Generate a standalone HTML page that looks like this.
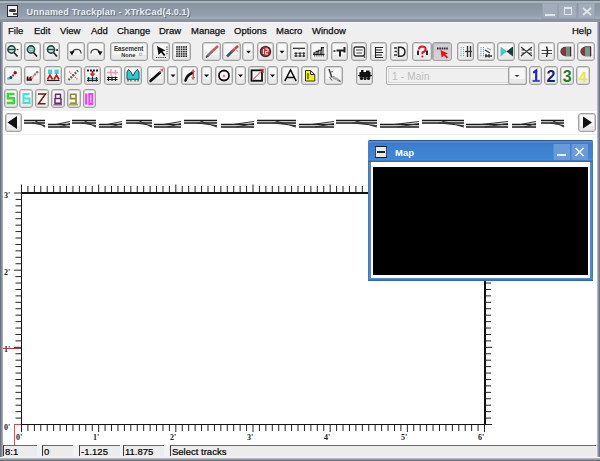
<!DOCTYPE html><html><head><meta charset="utf-8"><style>
*{margin:0;padding:0;box-sizing:border-box}
html,body{width:600px;height:461px;overflow:hidden;background:#efefef;font-family:"Liberation Sans",sans-serif}
.a{position:absolute}
.btn{position:absolute;border:1px solid #a2a2a2;border-radius:3px;background:linear-gradient(#f8f8f8 0,#f5f5f5 68%,#e9e9e9 69%,#eaeaea 100%);box-shadow:inset 0 0 0 1px #d4d4d4}
.btn svg{position:absolute;left:0;top:0}
.menu{position:absolute;top:25px;font-size:9.5px;color:#111;line-height:11px;-webkit-text-stroke:0.25px #111}
.fld{position:absolute;top:445px;height:11px;border-top:1px solid #6a6a6a;border-left:1px solid #3a3a3a;background:#ececec;font-size:9.5px;line-height:12.5px;padding-left:1px;color:#000;white-space:nowrap;overflow:hidden;-webkit-text-stroke:0.2px #000}
.lbl{position:absolute;font-family:"Liberation Serif",serif;font-size:8px;font-weight:bold;color:#222;line-height:8px}
</style></head><body>
<div class="a" style="left:0;top:0;width:600px;height:461px;background:#8a95a4"></div>
<div class="a" style="left:0;top:0;width:3px;height:461px;background:linear-gradient(90deg,#6b7282 0,#6b7282 1px,#878e9e 1px,#878e9e 2px,#a3a9b6 2px)"></div>
<div class="a" style="left:597px;top:0;width:3px;height:461px;background:linear-gradient(90deg,#b4b8c6 0,#b4b8c6 1px,#8a90a6 1px,#8a90a6 2px,#6e7590 2px)"></div>
<div class="a" style="left:0;top:457px;width:600px;height:4px;background:linear-gradient(#f4f8f8 0,#f4f8f8 1px,#b0b8c0 1px,#b0b8c0 2px,#8f98a3 2px,#8f98a3 3px,#6c7482 3px)"></div>
<div class="a" style="left:3px;top:22px;width:594px;height:436px;background:#efefef"></div>
<div class="a" style="left:0;top:0;width:600px;height:22px;background:linear-gradient(#6a7580 0,#6a7580 1px,#a8b4be 1px,#a8b4be 3px,#8894a0 3.5px,#8b97a4 7px,#95a1af 16px,#9eaab6 17px,#9eaab6 18.5px,#8a94a0 19.5px,#8c93a0 22px)"></div>
<div class="a" style="left:3px;top:22px;width:594px;height:2px;background:linear-gradient(#f3f5f9,#f0f1f3)"></div>
<div class="a" style="left:7px;top:5px;width:11px;height:12px;background:#f0f0f0;border:1px solid #2a2a34;border-width:1.5px 1px"><div class="a" style="left:1px;top:3px;width:7px;height:3px;background:#333;border-radius:2px"></div><div class="a" style="left:5px;top:7px;width:4px;height:2px;background:#555"></div></div>
<div class="a" style="left:26.5px;top:6px;font-size:9px;font-weight:bold;color:#e9ecf0;text-shadow:1px 1px 0 #6a7480;line-height:12px;letter-spacing:0.22px;white-space:nowrap">Unnamed Trackplan - XTrkCad(4.0.1)</div>
<div class="a" style="left:542px;top:3px;width:16px;height:16px;background:#a3adb9;border:1px solid #97a2af"></div>
<div class="a" style="left:558px;top:3px;width:19px;height:16px;background:#a3adb9;border:1px solid #97a2af"></div>
<div class="a" style="left:578px;top:3px;width:17px;height:16px;background:#a3adb9;border:1px solid #97a2af"></div>
<div class="a" style="left:545px;top:14px;width:10px;height:2px;background:#dfe4ea"></div>
<div class="a" style="left:564px;top:7px;width:8px;height:8px;border:1.5px solid #dfe4ea;border-top-width:2px"></div>
<svg class="a" style="left:582px;top:7px" width="10" height="9"><path d="M1 1L9 8M9 1L1 8" stroke="#dfe4ea" stroke-width="1.7"/></svg>
<div class="menu" style="left:8px">File</div>
<div class="menu" style="left:34px">Edit</div>
<div class="menu" style="left:60px">View</div>
<div class="menu" style="left:91px">Add</div>
<div class="menu" style="left:117px">Change</div>
<div class="menu" style="left:159px">Draw</div>
<div class="menu" style="left:191px">Manage</div>
<div class="menu" style="left:234px">Options</div>
<div class="menu" style="left:276px">Macro</div>
<div class="menu" style="left:312px">Window</div>
<div class="menu" style="left:572px">Help</div>
<div class="btn" style="left:5px;top:42px;width:17px;height:19px;"></div>
<div class="btn" style="left:24px;top:42px;width:17px;height:19px;"></div>
<div class="btn" style="left:43px;top:42px;width:17px;height:19px;"></div>
<div class="btn" style="left:67px;top:42px;width:18px;height:19px;"></div>
<div class="btn" style="left:87px;top:42px;width:18px;height:19px;"></div>
<div class="btn" style="left:110px;top:42px;width:38px;height:19px;"></div>
<div class="btn" style="left:152px;top:42px;width:18px;height:19px;"></div>
<div class="btn" style="left:172px;top:42px;width:19px;height:19px;"></div>
<div class="btn" style="left:202px;top:42px;width:19px;height:19px;"></div>
<div class="btn" style="left:222px;top:42px;width:19px;height:19px;"></div>
<div class="btn" style="left:242px;top:42px;width:12px;height:19px;"></div>
<div class="btn" style="left:257px;top:42px;width:17px;height:19px;"></div>
<div class="btn" style="left:276px;top:42px;width:12px;height:19px;"></div>
<div class="btn" style="left:290px;top:42px;width:18px;height:19px;"></div>
<div class="btn" style="left:310px;top:42px;width:18px;height:19px;"></div>
<div class="btn" style="left:331px;top:42px;width:17px;height:19px;"></div>
<div class="btn" style="left:351px;top:42px;width:16px;height:19px;"></div>
<div class="btn" style="left:370px;top:42px;width:17px;height:19px;"></div>
<div class="btn" style="left:390px;top:42px;width:18px;height:19px;"></div>
<div class="btn" style="left:412px;top:42px;width:20px;height:19px;"></div>
<div class="btn" style="left:432px;top:42px;width:20px;height:19px;background:linear-gradient(#cfcfd2,#d4d0d8);box-shadow:inset 1px 1px 0 #b4b4b4;"></div>
<div class="btn" style="left:457px;top:42px;width:17px;height:19px;"></div>
<div class="btn" style="left:477px;top:42px;width:18px;height:19px;"></div>
<div class="btn" style="left:497px;top:42px;width:18px;height:19px;"></div>
<div class="btn" style="left:518px;top:42px;width:17px;height:19px;"></div>
<div class="btn" style="left:538px;top:42px;width:17px;height:19px;"></div>
<div class="btn" style="left:557px;top:42px;width:18px;height:19px;"></div>
<div class="btn" style="left:577px;top:42px;width:18px;height:19px;"></div>
<div class="btn" style="left:4px;top:66px;width:18px;height:19px;"></div>
<div class="btn" style="left:24px;top:66px;width:17px;height:19px;"></div>
<div class="btn" style="left:44px;top:66px;width:18px;height:19px;"></div>
<div class="btn" style="left:64px;top:66px;width:18px;height:19px;"></div>
<div class="btn" style="left:84px;top:66px;width:17px;height:19px;"></div>
<div class="btn" style="left:104px;top:66px;width:18px;height:19px;"></div>
<div class="btn" style="left:124px;top:66px;width:18px;height:19px;"></div>
<div class="btn" style="left:147px;top:66px;width:18px;height:19px;"></div>
<div class="btn" style="left:167px;top:66px;width:11px;height:19px;"></div>
<div class="btn" style="left:181px;top:66px;width:17px;height:19px;"></div>
<div class="btn" style="left:201px;top:66px;width:11px;height:19px;"></div>
<div class="btn" style="left:215px;top:66px;width:18px;height:19px;"></div>
<div class="btn" style="left:235px;top:66px;width:11px;height:19px;"></div>
<div class="btn" style="left:248px;top:66px;width:18px;height:19px;"></div>
<div class="btn" style="left:267px;top:66px;width:11px;height:19px;"></div>
<div class="btn" style="left:281px;top:66px;width:18px;height:19px;"></div>
<div class="btn" style="left:301px;top:66px;width:18px;height:19px;"></div>
<div class="btn" style="left:324px;top:66px;width:19px;height:19px;"></div>
<div class="btn" style="left:356px;top:66px;width:17px;height:19px;"></div>
<div class="btn" style="left:529px;top:66px;width:13px;height:19px;"></div>
<div class="btn" style="left:544px;top:66px;width:14px;height:19px;"></div>
<div class="btn" style="left:560px;top:66px;width:14px;height:19px;"></div>
<div class="btn" style="left:576px;top:66px;width:14px;height:19px;"></div>
<div class="btn" style="left:4px;top:89px;width:14px;height:19px;"></div>
<div class="btn" style="left:19px;top:89px;width:14px;height:19px;"></div>
<div class="btn" style="left:35px;top:89px;width:14px;height:19px;"></div>
<div class="btn" style="left:51px;top:89px;width:14px;height:19px;"></div>
<div class="btn" style="left:67px;top:89px;width:14px;height:19px;"></div>
<div class="btn" style="left:83px;top:89px;width:13px;height:19px;"></div>
<div class="a" style="left:386px;top:66px;width:141px;height:19px;border:1px solid #b0b0b0;border-radius:2px;background:#efefef;box-shadow:inset 0 0 0 1px #fafafa,inset 0 0 0 2px #d8d8d8"></div>
<div class="a" style="left:392px;top:71px;font-size:10px;color:#bcbcbc;line-height:12px;letter-spacing:0.2px">1 - Main</div>
<div class="btn" style="left:508px;top:66px;width:19px;height:19px"></div>
<div class="a" style="left:3px;top:111px;width:594px;height:334px;background:#fff"></div>
<div class="a" style="left:3px;top:134px;width:594px;height:1px;background:#f0f0f0"></div>
<div class="btn" style="left:5px;top:113px;width:17px;height:19px"><svg width="15" height="17"><path d="M1.5 8.5L11 2V15Z" fill="#111"/></svg></div>
<div class="btn" style="left:578px;top:113px;width:18px;height:19px"><svg width="16" height="17"><path d="M13 8.5L4 2.5V14.5Z" fill="#111"/></svg></div>
<div class="a" style="left:21px;top:192px;width:465px;height:2px;background:#111"></div>
<div class="a" style="left:484px;top:192px;width:2px;height:233px;background:#111"></div>
<div class="a" style="left:21px;top:192px;width:1px;height:233px;background:#111"></div>
<div class="a" style="left:21px;top:424px;width:465px;height:1px;background:#111"></div>
<svg class="a" style="left:0;top:0" width="600" height="461"><path d="M21.50 184.5V192M21.50 425V432M27.93 186V192M27.93 425V431M34.36 186V192M34.36 425V431M40.79 186V192M40.79 425V431M47.22 186V192M47.22 425V431M53.65 186V192M53.65 425V431M60.08 186V192M60.08 425V431M66.51 186V192M66.51 425V431M72.94 186V192M72.94 425V431M79.38 186V192M79.38 425V431M85.81 186V192M85.81 425V431M92.24 186V192M92.24 425V431M98.67 184.5V192M98.67 425V432M105.10 186V192M105.10 425V431M111.53 186V192M111.53 425V431M117.96 186V192M117.96 425V431M124.39 186V192M124.39 425V431M130.82 186V192M130.82 425V431M137.25 186V192M137.25 425V431M143.68 186V192M143.68 425V431M150.11 186V192M150.11 425V431M156.54 186V192M156.54 425V431M162.97 186V192M162.97 425V431M169.40 186V192M169.40 425V431M175.83 184.5V192M175.83 425V432M182.26 186V192M182.26 425V431M188.69 186V192M188.69 425V431M195.12 186V192M195.12 425V431M201.56 186V192M201.56 425V431M207.99 186V192M207.99 425V431M214.42 186V192M214.42 425V431M220.85 186V192M220.85 425V431M227.28 186V192M227.28 425V431M233.71 186V192M233.71 425V431M240.14 186V192M240.14 425V431M246.57 186V192M246.57 425V431M253.00 184.5V192M253.00 425V432M259.43 186V192M259.43 425V431M265.86 186V192M265.86 425V431M272.29 186V192M272.29 425V431M278.72 186V192M278.72 425V431M285.15 186V192M285.15 425V431M291.58 186V192M291.58 425V431M298.01 186V192M298.01 425V431M304.44 186V192M304.44 425V431M310.88 186V192M310.88 425V431M317.31 186V192M317.31 425V431M323.74 186V192M323.74 425V431M330.17 184.5V192M330.17 425V432M336.60 186V192M336.60 425V431M343.03 186V192M343.03 425V431M349.46 186V192M349.46 425V431M355.89 186V192M355.89 425V431M362.32 186V192M362.32 425V431M368.75 186V192M368.75 425V431M375.18 186V192M375.18 425V431M381.61 186V192M381.61 425V431M388.04 186V192M388.04 425V431M394.47 186V192M394.47 425V431M400.90 186V192M400.90 425V431M407.33 184.5V192M407.33 425V432M413.76 186V192M413.76 425V431M420.19 186V192M420.19 425V431M426.62 186V192M426.62 425V431M433.06 186V192M433.06 425V431M439.49 186V192M439.49 425V431M445.92 186V192M445.92 425V431M452.35 186V192M452.35 425V431M458.78 186V192M458.78 425V431M465.21 186V192M465.21 425V431M471.64 186V192M471.64 425V431M478.07 186V192M478.07 425V431M484.50 184.5V192M484.50 425V432M14 424.50H21M486 424.50H492M15.5 418.07H21M486 418.07H491M15.5 411.64H21M486 411.64H491M15.5 405.21H21M486 405.21H491M15.5 398.78H21M486 398.78H491M15.5 392.35H21M486 392.35H491M15.5 385.92H21M486 385.92H491M15.5 379.49H21M486 379.49H491M15.5 373.06H21M486 373.06H491M15.5 366.62H21M486 366.62H491M15.5 360.19H21M486 360.19H491M15.5 353.76H21M486 353.76H491M14 347.33H21M486 347.33H492M15.5 340.90H21M486 340.90H491M15.5 334.47H21M486 334.47H491M15.5 328.04H21M486 328.04H491M15.5 321.61H21M486 321.61H491M15.5 315.18H21M486 315.18H491M15.5 308.75H21M486 308.75H491M15.5 302.32H21M486 302.32H491M15.5 295.89H21M486 295.89H491M15.5 289.46H21M486 289.46H491M15.5 283.03H21M486 283.03H491M15.5 276.60H21M486 276.60H491M14 270.17H21M486 270.17H492M15.5 263.74H21M486 263.74H491M15.5 257.31H21M486 257.31H491M15.5 250.88H21M486 250.88H491M15.5 244.44H21M486 244.44H491M15.5 238.01H21M486 238.01H491M15.5 231.58H21M486 231.58H491M15.5 225.15H21M486 225.15H491M15.5 218.72H21M486 218.72H491M15.5 212.29H21M486 212.29H491M15.5 205.86H21M486 205.86H491M15.5 199.43H21M486 199.43H491M14 193.00H21M486 193.00H492" stroke="#222" stroke-width="1"/></svg>
<div class="lbl" style="left:16px;top:434px">0'</div>
<div class="lbl" style="left:93px;top:434px">1'</div>
<div class="lbl" style="left:170px;top:434px">2'</div>
<div class="lbl" style="left:247px;top:434px">3'</div>
<div class="lbl" style="left:324px;top:434px">4'</div>
<div class="lbl" style="left:401px;top:434px">5'</div>
<div class="lbl" style="left:478px;top:434px">6'</div>
<div class="lbl" style="left:4px;top:424px">0'</div>
<div class="lbl" style="left:4px;top:346px">1'</div>
<div class="lbl" style="left:4px;top:269px">2'</div>
<div class="lbl" style="left:4px;top:192px">3'</div>
<div class="a" style="left:3px;top:348px;width:18px;height:1px;background:#a83848"></div>
<div class="a" style="left:14px;top:424px;width:1px;height:21px;background:#e05050"></div>
<div class="a" style="left:14px;top:424px;width:7px;height:1px;background:#d04858"></div>
<svg class="a" style="left:0;top:0" width="600" height="461"><g stroke="#1e4a44" fill="none"><circle cx="11.5" cy="49.5" r="3.6" stroke-width="1.6" fill="#cfe6e0"/><path d="M8 49.5H15" stroke-width="1.4"/><path d="M16.5 49.5H18.5" stroke-width="1.2"/><circle cx="31" cy="49.5" r="3.6" stroke-width="1.6" fill="#bfe0d8"/><circle cx="31" cy="49.5" r="1.6" stroke="#6aa8a0" stroke-width="1"/><circle cx="51" cy="49.5" r="3.6" stroke-width="1.6" fill="#cfe6e0"/><path d="M47.5 49.5H54.5" stroke-width="1.4"/></g><path d="M14 52.5L17.5 56.5M33.5 52.5L37 56.5M53.5 52.5L57 56.5" stroke="#222" stroke-width="1.6"/><circle cx="57" cy="50" r="1.1" fill="#222"/><path d="M72.5 52.5A4.3 4 0 0 1 81 53.5" stroke="#444" stroke-width="1.3" fill="none"/><path d="M69.5 51.5L74.5 51L72 55.5Z" fill="#111"/><path d="M91 53.5A4.3 4 0 0 1 99.5 52.5" stroke="#444" stroke-width="1.3" fill="none"/><path d="M102.5 51.5L97.5 51L100 55.5Z" fill="#111"/><text x="128.7" y="51" font-family="Liberation Sans" font-size="6.5" font-weight="bold" fill="#303030" text-anchor="middle" textLength="29.5" lengthAdjust="spacingAndGlyphs">Easement</text><text x="128.3" y="56.6" font-family="Liberation Sans" font-size="5.6" font-weight="bold" fill="#303030" text-anchor="middle">None</text><rect x="139.3" y="53.3" width="2.6" height="2" fill="none" stroke="#aaa" stroke-width="0.7"/><path d="M157 46L165.5 50.5L162.5 51.5L165.5 55L164 56L161 52.5L158.5 55Z" fill="#111"/><path d="M156 57.5H166M167 46.5V55" stroke="#333" stroke-width="1.1" stroke-dasharray="1.2 1"/><g fill="#222"><rect x="176.2" y="46.2" width="1.6" height="1.6"/><rect x="176.2" y="48.5" width="1.6" height="1.6"/><rect x="176.2" y="50.8" width="1.6" height="1.6"/><rect x="176.2" y="53.1" width="1.6" height="1.6"/><rect x="176.2" y="55.4" width="1.6" height="1.6"/><rect x="178.5" y="46.2" width="1.6" height="1.6"/><rect x="178.5" y="48.5" width="1.6" height="1.6"/><rect x="178.5" y="50.8" width="1.6" height="1.6"/><rect x="178.5" y="53.1" width="1.6" height="1.6"/><rect x="178.5" y="55.4" width="1.6" height="1.6"/><rect x="180.8" y="46.2" width="1.6" height="1.6"/><rect x="180.8" y="48.5" width="1.6" height="1.6"/><rect x="180.8" y="50.8" width="1.6" height="1.6"/><rect x="180.8" y="53.1" width="1.6" height="1.6"/><rect x="180.8" y="55.4" width="1.6" height="1.6"/><rect x="183.1" y="46.2" width="1.6" height="1.6"/><rect x="183.1" y="48.5" width="1.6" height="1.6"/><rect x="183.1" y="50.8" width="1.6" height="1.6"/><rect x="183.1" y="53.1" width="1.6" height="1.6"/><rect x="183.1" y="55.4" width="1.6" height="1.6"/><rect x="185.4" y="46.2" width="1.6" height="1.6"/><rect x="185.4" y="48.5" width="1.6" height="1.6"/><rect x="185.4" y="50.8" width="1.6" height="1.6"/><rect x="185.4" y="53.1" width="1.6" height="1.6"/><rect x="185.4" y="55.4" width="1.6" height="1.6"/></g><path d="M207 56.5L212 51.5" stroke="#7a7a7a" stroke-width="2.6"/><path d="M211.5 52L218 46" stroke="#c85a60" stroke-width="2.6"/><path d="M206 57.5L207.5 56" stroke="#333" stroke-width="1.5"/><path d="M227 56.5L232 51.5" stroke="#2f6068" stroke-width="2.6"/><path d="M231.5 52L238 46" stroke="#c84048" stroke-width="2.6"/><path d="M234 48L238.5 52" stroke="#e08080" stroke-width="1"/><path d="M246.0 50.8h5l-2.5 2.8z" fill="#111"/><path d="M279.5 50.8h5l-2.5 2.8z" fill="#111"/><circle cx="265.5" cy="51.5" r="6" fill="#b8b0b0"/><circle cx="265.5" cy="51.5" r="5" fill="#cc3434" stroke="#3a2626" stroke-width="1.2"/><path d="M263.5 49V54M265.5 49H268V51.5H265.5V54H268" stroke="#fff" stroke-width="1" fill="none"/><path d="M293 48.3H305" stroke="#222" stroke-width="1.2"/><path d="M299 48.5V50" stroke="#777" stroke-width="1"/><path d="M294.3 53.2H297.7M294.3 56H297.7M298.3 53.2H301.7M298.3 56H301.7M302.3 53.2H305.2M302.3 56H305.2" stroke="#2a2a2a" stroke-width="1.1"/><path d="M296 52.2V57M300 52.2V57M303.8 52.2V57" stroke="#2a2a2a" stroke-width="1.2"/><path d="M313.5 54V52.8H316.2V51.4H318.8V50.2H321.4V47.5H324V54Z" fill="#6a6a6a"/><path d="M313.5 52.8H316.2V51.4H318.8V50.2H321.4V47.5H324" stroke="#1e1e1e" stroke-width="1.1" fill="none"/><path d="M313 54.4H324.5" stroke="#1e1e1e" stroke-width="1.3"/><path d="M314 55.8H324.5" stroke="#333" stroke-width="1" stroke-dasharray="1.2 1"/><path d="M316 52V54M319.5 50.8V54M323 48.5V54" stroke="#ddd" stroke-width="0.7"/><path d="M336.5 50.5H344M340 50V56.5M344.5 47V52.5" stroke="#222" stroke-width="2"/><path d="M333.5 51H335.5" stroke="#222" stroke-width="1.5"/><rect x="354" y="47" width="10.5" height="9" rx="2" stroke="#333" stroke-width="1.3" fill="none"/><path d="M356 50H362.5M356.5 53H362" stroke="#444" stroke-width="1"/><circle cx="364.5" cy="57" r="0.8" fill="#222"/><path d="M375.5 47V57.5M375 47.5H383M375 50H382M375 52.5H383M375 55H382M375 57.5H383" stroke="#222" stroke-width="1.1"/><path d="M394 48H397M394.5 51.5H397M394 55H397" stroke="#333" stroke-width="1.4"/><path d="M398.5 47.2V56.3H401A4.6 4.6 0 0 0 401 47.2Z" stroke="#222" stroke-width="1.5" fill="none"/><path d="M419 49.5Q419 46.5 422.3 46.5Q425.8 46.6 425.6 49.5Q425.3 51.5 422.4 52.5V54.3" stroke="#e01828" stroke-width="2" fill="none"/><circle cx="422.4" cy="56.5" r="1.1" fill="#e01828"/><path d="M418 50.5V55M427 50.5V55" stroke="#2a2a2a" stroke-width="2"/><path d="M437 48.5H448.5" stroke="#2a2a30" stroke-width="2" stroke-dasharray="1.6 0.7"/><path d="M440.5 50L448 53.5L445.5 54.5L448.2 57.2L446.6 58.4L444 55.6L441.6 57.6Z" fill="#f01010"/><path d="M461 47V56M463.5 47V56" stroke="#4ab0b0" stroke-width="1" stroke-dasharray="1.2 0.8"/><path d="M467.5 46V57M470.5 46V57" stroke="#333" stroke-width="1.4"/><path d="M465 51.5H472" stroke="#333" stroke-width="1.2"/><path d="M481 47V57M483.5 47V57" stroke="#4ab0b0" stroke-width="1" stroke-dasharray="1.2 0.8"/><path d="M485 50L490 53M485 56H492M486 54V57.5M489 54V57.5" stroke="#333" stroke-width="1.3"/><path d="M487 48L491 50" stroke="#888" stroke-width="1"/><path d="M500.5 46.5L507 51.5L500.5 56.5Z" fill="#40c8c8"/><path d="M513 46.5L506.5 51.5L513 56.5Z" fill="#1f3a36"/><path d="M521 47L532 56M532 47L521 56M521.5 50H524M521.5 53H524M529.5 50H532M529.5 53H532" stroke="#333" stroke-width="1.2"/><path d="M541.5 50.5H552M541.5 53.5H552" stroke="#444" stroke-width="1"/><path d="M546.5 46.5Q548.5 51.5 546.5 57" stroke="#222" stroke-width="1.4" fill="none"/><path d="M571 46.8H565A4.7 4.7 0 0 0 565 56.2H571Z" fill="#7a3c42"/><path d="M566 46.8H571V56.2H566Z" fill="#7d8a80"/><path d="M570.6 46.8V56.2" stroke="#2e2e2e" stroke-width="1.3"/><path d="M591 46.8H585A4.7 4.7 0 0 0 585 56.2H591Z" fill="#7a3c42"/><path d="M585 46.8H591V56.2H585Z" fill="#84948a"/><path d="M590.6 46.8V56.2" stroke="#2e2e2e" stroke-width="1.3"/><path d="M584.5 46.8H591" stroke="#444" stroke-width="0.8"/><circle cx="8.6" cy="78.6" r="1.5" fill="#3ad8c8"/><circle cx="10.8" cy="77.6" r="1.5" fill="#1e3a3a"/><path d="M12 76.2L14.2 74" stroke="#e8a0a8" stroke-width="2"/><circle cx="15.2" cy="72.8" r="1.7" fill="#8a1a2a"/><circle cx="13.2" cy="75.5" r="0.9" fill="#7a3a3a"/><path d="M27.5 76.5V80H31V76.5" stroke="#1a0a0a" stroke-width="1.6" fill="none"/><circle cx="29.3" cy="78.3" r="1.1" fill="#c02030"/><circle cx="32.3" cy="77.8" r="1.2" fill="#e88890"/><circle cx="35" cy="74.5" r="1.3" fill="#8a8a8a"/><circle cx="37.2" cy="72.3" r="1.3" fill="#7a7a7a"/><circle cx="33.5" cy="76" r="0.8" fill="#d06070"/><rect x="48" y="69.5" width="4.2" height="4.5" fill="#38d8e0"/><rect x="54.5" y="69.5" width="4.2" height="4.5" fill="#38d8e0"/><path d="M47.5 79.5L50 75L52.5 79.5M54 79.5L56.5 75L59 79.5" stroke="#c82020" stroke-width="1.8" fill="none"/><path d="M47 80.5H59.5" stroke="#222" stroke-width="1.2"/><path d="M68.5 80L78 70.5" stroke="#4a6a5a" stroke-width="2.2" stroke-dasharray="1.8 1.2"/><path d="M69 71.5L71.5 74M75 77L77.5 79.5" stroke="#e07890" stroke-width="1.6" stroke-dasharray="1.2 0.8"/><circle cx="73.2" cy="75.3" r="1.2" fill="#c04858"/><path d="M87 70.5H98" stroke="#222" stroke-width="2" stroke-dasharray="2 1"/><path d="M92.5 71V74" stroke="#d02030" stroke-width="2"/><path d="M89.5 73.5H95.5L92.5 77Z" fill="#d02030"/><path d="M87 78.5H98" stroke="#2aa898" stroke-width="1.4"/><path d="M87 80.5H98" stroke="#222" stroke-width="1.2"/><path d="M88.5 77V81.5M92.5 77V81.5M96.5 77V81.5" stroke="#222" stroke-width="1.2"/><path d="M107 72.5H118M111 69V76M115.5 70V75" stroke="#e898b8" stroke-width="1.4"/><path d="M107 77.5H117.5M107 79.5H117.5" stroke="#222" stroke-width="1.1"/><path d="M108.5 76.5V81M112 76.5V81M115.5 76.5V81" stroke="#222" stroke-width="1.2"/><path d="M127 79.3V72L128.5 69.5Q130.5 70 133 76Q135.5 70 137.5 69.5L139 72V79.3Z" fill="#28cdd5" stroke="#203838" stroke-width="0.9"/><path d="M128 80V81.5M131 80V81.5M135 80V81.5M138 80V81.5" stroke="#222" stroke-width="1"/><path d="M150.5 81L160 72.5" stroke="#111" stroke-width="2.6" stroke-linecap="round"/><path d="M159.5 72.5L163 69" stroke="#e07070" stroke-width="1.1"/><path d="M163.5 68.5L160 69.3L162.7 72Z" fill="#e06070"/><path d="M170.5 74.5h5l-2.5 2.8z" fill="#111"/><path d="M204.0 74.5h5l-2.5 2.8z" fill="#111"/><path d="M238.0 74.5h5l-2.5 2.8z" fill="#111"/><path d="M270.0 74.5h5l-2.5 2.8z" fill="#111"/><path d="M185.5 80.5Q187 75 192.5 72.8" stroke="#111" stroke-width="2.6" fill="none" stroke-linecap="round"/><path d="M193.2 69.5V79.5" stroke="#e03040" stroke-width="1.3"/><path d="M191.5 72L193.2 69.8L195 72M191.5 77L193.2 79.2L195 77" stroke="#e86070" stroke-width="1" fill="none"/><circle cx="224" cy="75.5" r="5" stroke="#111" stroke-width="1.8" fill="none"/><circle cx="224" cy="76" r="1.2" fill="#e07080"/><rect x="251.5" y="70.3" width="10.5" height="10.5" stroke="#111" stroke-width="1.8" fill="none"/><path d="M252.5 80L261.5 71" stroke="#e07080" stroke-width="1.1"/><path d="M259.5 69.5H263V73" stroke="#e03040" stroke-width="1.5" fill="none"/><path d="M284.8 81.2L290.5 70L296.2 81.2M287 77.5H294" stroke="#111" stroke-width="1.5" fill="none"/><path d="M305.5 70.5H310.5L314.8 74.5V81H305.5Z" fill="#f5f500" stroke="#333" stroke-width="1"/><path d="M310.5 70.5V74.5H314.8" stroke="#333" stroke-width="1" fill="none"/><path d="M308 73V79" stroke="#333" stroke-width="1.2"/><path d="M329 69L331.5 76.5L340.5 81.5" stroke="#333" stroke-width="1.4" fill="none"/><path d="M331 72L333 71.5M333 77.5L334 76M336 79.2L337 77.8M329.5 76.8L332 80.5" stroke="#555" stroke-width="1"/><path d="M332 77L339 80" stroke="#aaa" stroke-width="2"/><path d="M359.5 72H370.5V77.5H359.5Z" fill="#111"/><path d="M361 70H363.5V72H361ZM366 70.5H369.5V72H366Z" fill="#111"/><circle cx="361.5" cy="78.5" r="1.6" fill="#111"/><circle cx="365" cy="78.5" r="1.6" fill="#111"/><circle cx="368.5" cy="78.5" r="1.6" fill="#111"/><path d="M358 75.5H372" stroke="#111" stroke-width="1.2"/><path d="M514.5 75h5l-2.5 2z" fill="#333"/><path d="M533.2 72.8L536.2 70.5V80.5" stroke="#2424d0" stroke-width="2.2" fill="none"/><path d="M532.5 81H539.8" stroke="#2424d0" stroke-width="1.6"/><circle cx="536" cy="71.2" r="1.3" fill="#2424d0"/><text x="551" y="81.6" font-family="Liberation Sans" font-size="16" font-weight="bold" fill="#1c1c74" text-anchor="middle">2</text><text x="567.2" y="81.6" font-family="Liberation Sans" font-size="16" font-weight="bold" fill="#2a7a2a" text-anchor="middle">3</text><text x="583" y="81.6" font-family="Liberation Sans" font-size="15" font-weight="bold" fill="#e4ec40" text-anchor="middle">4</text><path d="M14.5 94H7.8V98.3H13.8V103H6.8" stroke="#38d838" stroke-width="2.4" fill="none"/><path d="M29.5 94H23.5V103H29.5V98.5H23.5" stroke="#3ee4d4" stroke-width="2" fill="none"/><path d="M38 94H45.5L38.5 103.8H45.5" stroke="#6a1f22" stroke-width="1.5" fill="none"/><path d="M55.5 94.2H60.5V98.6H55.5ZM55 98.6H61V103.3H55Z" stroke="#6a286a" stroke-width="1.5" fill="none" stroke-linejoin="round"/><path d="M53.5 104.8H62" stroke="#6a286a" stroke-width="1"/><path d="M76 98.6H70.5V94.2H76V103.3H70" stroke="#8c8c2c" stroke-width="1.6" fill="none"/><path d="M68.5 104.8H78" stroke="#8c8c2c" stroke-width="1"/><path d="M86.2 93.5V104.5" stroke="#f040f0" stroke-width="2.2"/><path d="M89.3 94H92.3V104H89.3Z" stroke="#f040f0" stroke-width="2" fill="none"/><path d="M24.0 120.5H45.0M24.0 123H45.0" stroke="#1a1a1a" stroke-width="1.5"/><path d="M32.4 123L45.0 125.5M35.4 121L45.0 127" stroke="#333" stroke-width="1.1"/><path d="M48.0 124.5H70.0M48.0 127H70.0" stroke="#1a1a1a" stroke-width="1.5"/><path d="M55.7 124.5L70.0 121.5M59.7 127L70.0 123.5" stroke="#333" stroke-width="1.1"/><path d="M72.0 120.5H96.0M72.0 123H96.0" stroke="#1a1a1a" stroke-width="1.5"/><path d="M81.6 123L96.0 125.5M84.6 121L96.0 127" stroke="#333" stroke-width="1.1"/><path d="M99.0 124.5H122.0M99.0 127H122.0" stroke="#1a1a1a" stroke-width="1.5"/><path d="M107.0 124.5L122.0 121.5M111.0 127L122.0 123.5" stroke="#333" stroke-width="1.1"/><path d="M126.0 120.5H152.0M126.0 123H152.0" stroke="#1a1a1a" stroke-width="1.5"/><path d="M136.4 123L152.0 125.5M139.4 121L152.0 127" stroke="#333" stroke-width="1.1"/><path d="M154.0 124.5H181.0M154.0 127H181.0" stroke="#1a1a1a" stroke-width="1.5"/><path d="M163.4 124.5L181.0 121.5M167.4 127L181.0 123.5" stroke="#333" stroke-width="1.1"/><path d="M184.0 120.5H217.0M184.0 123H217.0" stroke="#1a1a1a" stroke-width="1.5"/><path d="M197.2 123L217.0 125.5M200.2 121L217.0 127" stroke="#333" stroke-width="1.1"/><path d="M221.0 124.5H254.0M221.0 127H254.0" stroke="#1a1a1a" stroke-width="1.5"/><path d="M232.6 124.5L254.0 121.5M236.6 127L254.0 123.5" stroke="#333" stroke-width="1.1"/><path d="M257.0 120.5H296.0M257.0 123H296.0" stroke="#1a1a1a" stroke-width="1.5"/><path d="M272.6 123L296.0 125.5M275.6 121L296.0 127" stroke="#333" stroke-width="1.1"/><path d="M299.0 124.5H334.0M299.0 127H334.0" stroke="#1a1a1a" stroke-width="1.5"/><path d="M311.2 124.5L334.0 121.5M315.2 127L334.0 123.5" stroke="#333" stroke-width="1.1"/><path d="M336.0 120.5H377.0M336.0 123H377.0" stroke="#1a1a1a" stroke-width="1.5"/><path d="M352.4 123L377.0 125.5M355.4 121L377.0 127" stroke="#333" stroke-width="1.1"/><path d="M380.0 124.5H419.0M380.0 127H419.0" stroke="#1a1a1a" stroke-width="1.5"/><path d="M393.6 124.5L419.0 121.5M397.6 127L419.0 123.5" stroke="#333" stroke-width="1.1"/><path d="M422.0 120.5H464.0M422.0 123H464.0" stroke="#1a1a1a" stroke-width="1.5"/><path d="M438.8 123L464.0 125.5M441.8 121L464.0 127" stroke="#333" stroke-width="1.1"/><path d="M466.0 124.5H508.0M466.0 127H508.0" stroke="#1a1a1a" stroke-width="1.5"/><path d="M480.7 124.5L508.0 121.5M484.7 127L508.0 123.5" stroke="#333" stroke-width="1.1"/><path d="M512.0 124.5H536.0M512.0 127H536.0" stroke="#1a1a1a" stroke-width="1.5"/><path d="M520.4 124.5L536.0 121.5M524.4 127L536.0 123.5" stroke="#333" stroke-width="1.1"/><path d="M541.0 120.5H564.0M541.0 123H564.0" stroke="#1a1a1a" stroke-width="1.5"/><path d="M550.2 123L564.0 125.5M553.2 121L564.0 127" stroke="#333" stroke-width="1.1"/></svg>
<div class="a" style="left:368px;top:140px;width:225px;height:141px;background:linear-gradient(90deg,#3568a8 0,#4a88d4 1px,#4a88d4 calc(100% - 1px),#2f5f9f 100%);border-radius:2px 2px 0 0"></div>
<div class="a" style="left:368px;top:140px;width:225px;height:22px;background:linear-gradient(#2c5590 0,#2c5590 1px,#4f8fdc 1px,#4f8fdc 2px,#3b7dcb 3px,#3f86d6 19px,#4a90e0 20px,#3568a8 21px,#3568a8 22px);border-radius:2px 2px 0 0"></div>
<div class="a" style="left:368px;top:278px;width:225px;height:3px;background:linear-gradient(#5a96dc,#2f5f9f)"></div>
<div class="a" style="left:371px;top:162px;width:219px;height:116px;background:#fff"></div>
<div class="a" style="left:373px;top:167px;width:215px;height:108px;background:#000"></div>
<div class="a" style="left:395px;top:147px;font-size:9.5px;font-weight:bold;color:#fff;line-height:12px">Map</div>
<div class="a" style="left:553px;top:144px;width:17px;height:16px;background:#6a9ad8;border-left:1px solid #5a8ac8"></div>
<div class="a" style="left:571px;top:144px;width:17px;height:16px;background:#6a9ad8;border-left:1px solid #5a8ac8"></div>
<div class="a" style="left:557px;top:154px;width:9px;height:2px;background:#e4eef8"></div>
<svg class="a" style="left:574px;top:147px" width="11" height="10"><path d="M1.5 1L9.5 9M9.5 1L1.5 9" stroke="#eef4fa" stroke-width="1.7"/></svg>
<div class="a" style="left:375px;top:146px;width:12px;height:12px;background:#ece8e2;border:1px solid #34466a;border-top:1.5px solid #141c30;border-bottom:1.5px solid #141c30"><div class="a" style="left:1px;top:4px;width:8px;height:2px;background:#222"></div></div>
<div class="a" style="left:3px;top:445px;width:594px;height:12px;background:#f2f2f2"></div>
<div class="fld" style="left:3px;width:34px">8:1</div>
<div class="fld" style="left:42px;width:31px">0</div>
<div class="fld" style="left:79px;width:41px">-1.125</div>
<div class="fld" style="left:123px;width:41px">11.875</div>
<div class="fld" style="left:170px;width:426px">Select tracks</div>
</body></html>
